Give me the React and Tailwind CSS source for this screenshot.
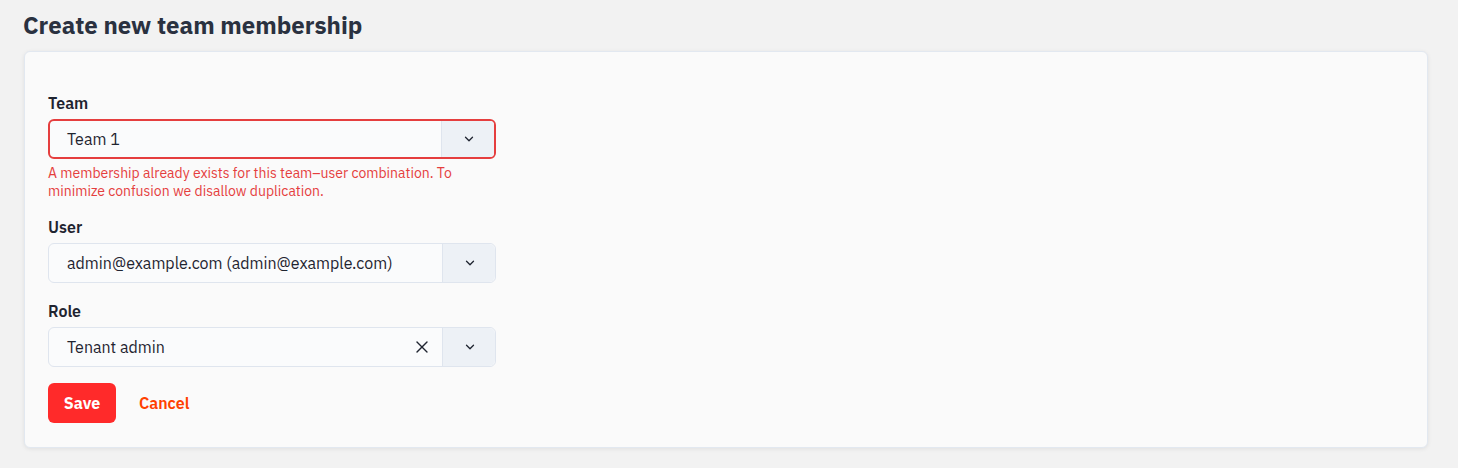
import { ChevronDown, X } from 'lucide-react';

const Field = ({ label, value, error, clearable }) => (
  <div className="flex flex-col">
    <label className="mb-2 text-[16px] leading-[16px] font-semibold text-[#1f2430]">{label}</label>
    <div
      className={`flex h-10 w-[448px] rounded-md bg-[#fafbfc] ${
        error ? 'border-2 border-[#e53e3e]' : 'border border-[#dfe5ee]'
      }`}
    >
      <div
        className={`flex flex-1 items-center pr-[10px] text-[16px] text-[#1f2430] ${
          error ? 'pl-[17px]' : 'pl-[18px]'
        }`}
      >
        <span className="flex-1">{value}</span>
        {clearable && <X size={20} strokeWidth={1.6} className="text-[#1f2430]" />}
      </div>
      <div
        className={`flex w-[53px] items-center justify-center border-l border-[#dfe5ee] bg-[#edf1f6] pl-px ${
          error ? 'rounded-r-[4px]' : 'rounded-r-md'
        }`}
      >
        <ChevronDown size={14} strokeWidth={2.25} className="text-[#1f2430]" />
      </div>
    </div>
    {error && (
      <p className="mt-[5px] -mb-px w-[430px] text-[14px] leading-[18px] text-[#e53e3e]">{error}</p>
    )}
  </div>
);

export default function App() {
  return (
    <div
      className="min-h-[468px] bg-[#f2f2f2] pl-6 pr-[30px] pt-[8px]"
      style={{ fontFamily: "'IBM Plex Sans', 'Noto Sans', sans-serif" }}
    >
      <h1 className="-ml-px text-[24px] font-bold leading-[34px] text-[#2a3140]">Create new team membership</h1>
      <div className="mt-[9px] rounded-md border border-[#e2e8f0] bg-[#fafafa] pl-[23px] pr-6 pb-6 pt-[43px] shadow-[0_1px_4px_rgba(0,0,0,0.08)]">
        <div className="flex flex-col gap-5">
          <Field
            label="Team"
            value="Team 1"
            error="A membership already exists for this team–user combination. To minimize confusion we disallow duplication."
          />
          <Field label="User" value="admin@example.com (admin@example.com)" />
          <Field label="Role" value="Tenant admin" clearable />
        </div>
        <div className="mt-4 flex items-center gap-[23px]">
          <button className="h-10 w-[68px] rounded-md bg-[#ff2a2a] text-[16px] font-bold text-white">Save</button>
          <button className="text-[16px] font-semibold text-[#ff4000]">Cancel</button>
        </div>
      </div>
    </div>
  );
}
